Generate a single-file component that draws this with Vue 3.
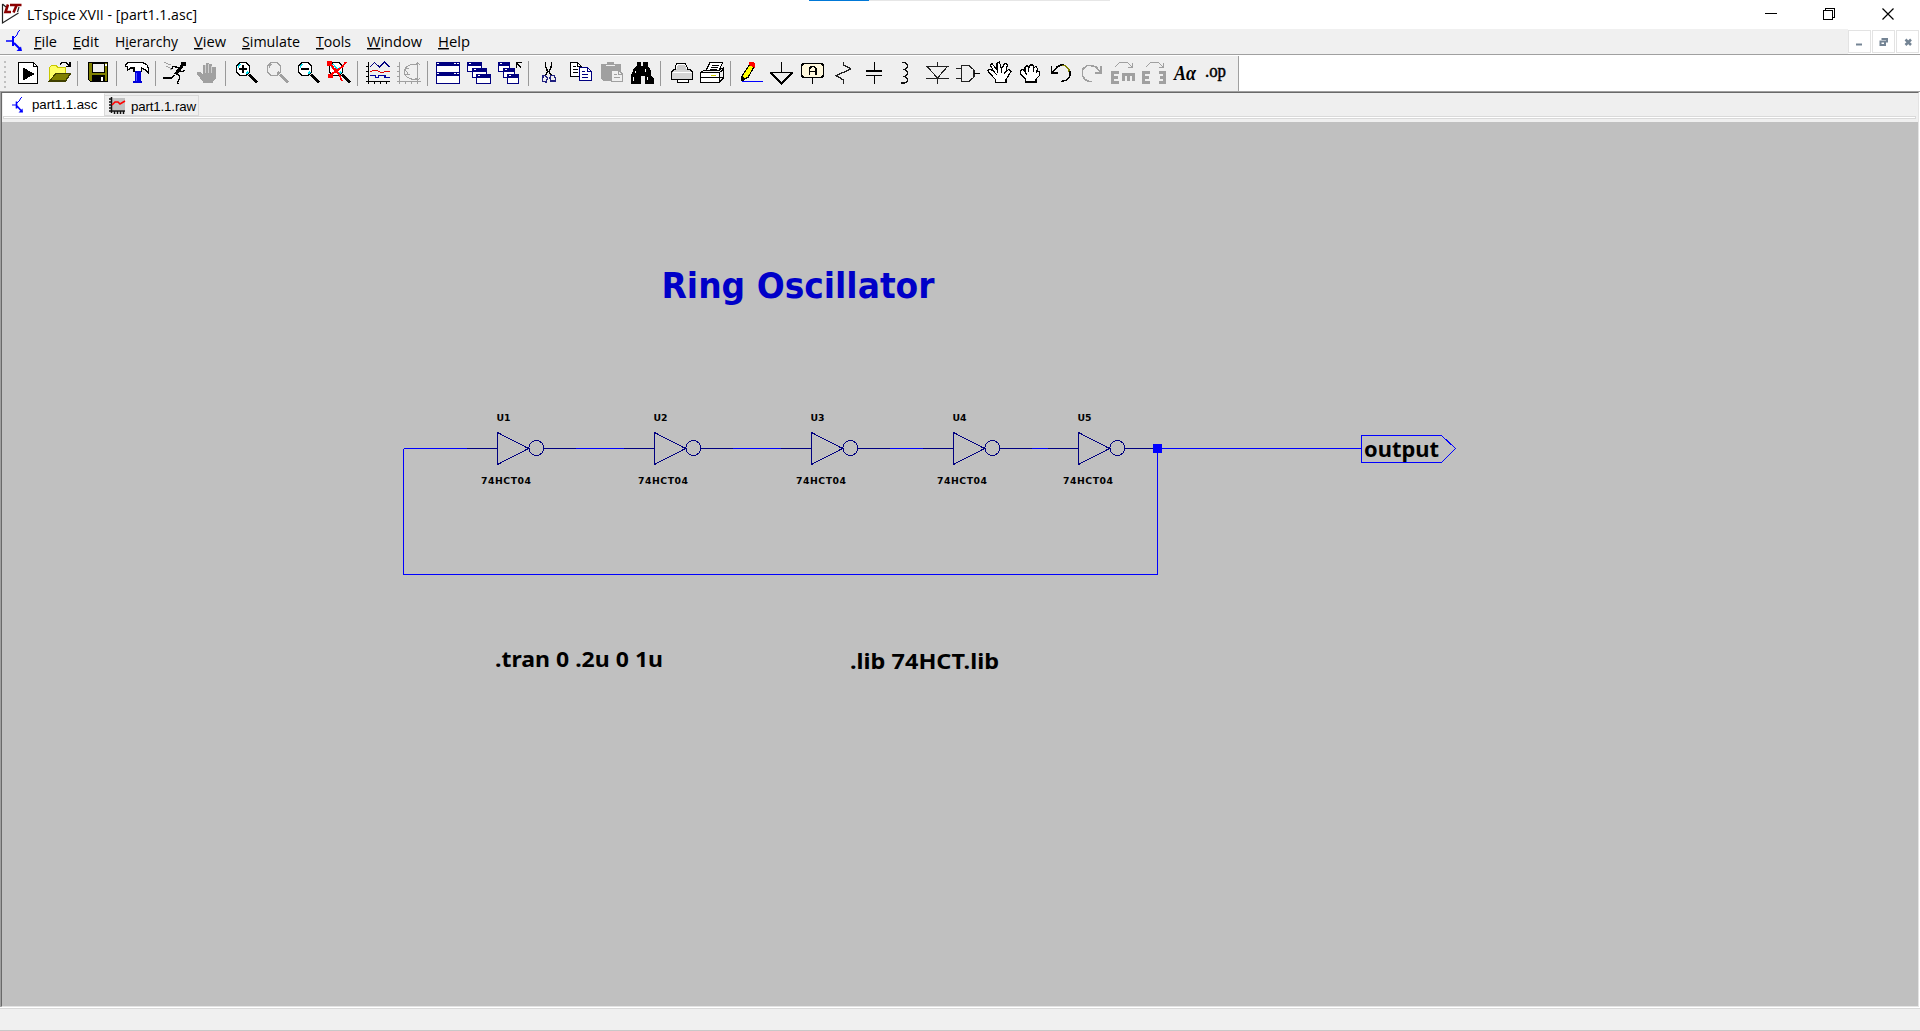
<script setup>
const menus = [
  { pre: '', key: 'F', post: 'ile', x: 34, w: 23 },
  { pre: '', key: 'E', post: 'dit', x: 73, w: 26 },
  { pre: 'H', key: 'i', post: 'erarchy', x: 115, w: 63 },
  { pre: '', key: 'V', post: 'iew', x: 194, w: 32 },
  { pre: '', key: 'S', post: 'imulate', x: 242, w: 58 },
  { pre: '', key: 'T', post: 'ools', x: 316, w: 35 },
  { pre: '', key: 'W', post: 'indow', x: 367, w: 55 },
  { pre: '', key: 'H', post: 'elp', x: 438, w: 32 }
]

const K = '#000', N = '#000080', G = '#a0a0a0'
const p = (d, stroke = K, fill = 'none', w = 1) => ({ d, stroke, fill, w })
const lens = (c, hi) => [
  p('M5 2L2 5V11L5 14H11L14 11V5L11 2Z', 'none', hi ? '#fff' : 'none'),
  p('M5 1.5H11L14.5 5V11L11 14.5H5L1.5 11V5Z', c, 'none', 1.3),
  p('M3.5 7V5L5.5 3M11 13L13 11', hi ? '#00e0f0' : c, 'none', 1.6),
  p('M14 13.5L22 21.5', c, 'none', 3.2)
]
const cascade = (w) => [[-.5, 1.5], [4.5, 7.5], [8.5, 13.5]].flatMap(([x, y]) => [
  p(`M${x} ${y}h${w}v9h-${w}Z`, N, '#fff'),
  p(`M${x} ${y}h${w}v2.5h-${w}Z`, N, N),
  p(`M${x + 1} ${y + 1}h2`, '#fff')
])
const tools = [
  [p('M1.5 1.5H16.5L20.5 5.5V22.5H1.5Z', K, '#fff', 1.2), p('M16.5 1.5V5.500H20.5'), p('M6 7V19L16.5 13Z', K, K)],
  [p('M1.5 20V6.5L3.5 4.5H8L10 6.5H17.5V12.5H9L2 20Z', '#c8c800', '#ffff66'), p('M1.5 20L8 12.5H22.5L17.5 20Z', '#404000', '#808000', 1.2), p('M12 3.5L14 1.5H18L21 4.5M22 1V5.5H18', K, 'none', 1.3)],
  'sep',
  [p('M1.5 1.5H20.5V20.500H3.5L1.5 18.5Z', K, '#808000', 1.4), p('M5 2H17V11H5Z', K, '#efefef'), p('M5.5 14.5H17.500V20.5H5.5Z', K, K), p('M13.500 16H15.500V19.5H13.500Z', 'none', '#fff'), p('M18 3H19.5V5H18Z', 'none', '#fff')],
  'sep',
  [p('M-.5 3.5L2.5 1.5H17L21 4L22.500 8V12L19 8.5L15.5 7V10.5H8V7H4.5L1.5 9.5V6L-.5 5Z', K, '#fff', 1.2), p('M9 10.5H14V20H15.500V21.5H7.5V20H9Z', '#0000d8', '#0000e8'), p('M10.5 12V20', '#55f')],
  'sep',
  [p('M16.500 1H20V4.500H16.500Z', K, K), p('M17 5L13 10L10.500 13.500', K, 'none', 3.2), p('M14.500 6.500L8 5.500L6 9M14 8.500L16.500 10.500L20.500 9.500M12 12.500L15 16L12.5 22L14.500 22.500M10 14L6.500 17H-1V15.500', K, 'none', 1.3), p('M-1 1L3 3L6 4M1 5L5 7L6.500 9', G)],
  [p('M1 12L4 11L7 14V4H9V12H10V2H12V12H13V3H15V12H16V6H19.5V17L16 21.5H8Z', G, G), p('M9.5 4V12M12.5 3V12M15.5 5V12', '#efefef', 'none', .6)],
  'sep',
  [...lens(K, true), p('M4 8H12M8 4V12', K, 'none', 2)],
  lens(G, false),
  [...lens(K, true), p('M4 8H12', K, 'none', 2)],
  [...lens(K, true), p('M6 5L10 8M8 11L12 7', '#00e0f0', 'none', 1.6), p('M0 2.500L4 5L7 9L11 13L14 20M18 1L15 5L10 9L5 12L1 15.500M0 1H3V4H0ZM1 13.500H4V16H1ZM4 7L9 9', '#f00', 'none', 1.8)],
  'sep',
  [p('M1.5 1V22.5M-1 5.5H1M-1 10.5H1M-1 15.5H1M-1 20.5H23M7.5 20V23M13.5 20V23M19.5 20V23', K, 'none', 1.2), p('M3 6L7.5 1.5L12.5 6L17.5 1L22.500 6', N), p('M3 11L7 9L11 10L15 12L19 10L22.500 11', '#e00000', 'none', 1.2), p('M3 14.5H8.500V16.5H11.500V14.5H18V16.5H22.500', '#0000a0', 'none', 1.2)],
  [p('M1.5 1V22.5M-1 5.5H1M-1 10.5H1M-1 15.5H1M-1 20.5H23M7.5 20V23M13.5 20V23M19.5 20V23M19.500 2V19M17.500 4L19.500 2L22 4M17.500 17L19.500 19L22 17M19 3H13.500L9 5.500L6.500 8.500V13L9 16L13.500 18H19M11 7L7 8.500L10 12.500M7 13.500H12', G)],
  'sep',
  [p('M-.5 1.5H22.5V11.5H-.5Z', N, '#fff'), p('M-.5 11.5H22.5V22.5H-.5Z', N, '#fff'), p('M-1 1H23V5H-1ZM-1 11H23V15H-1Z', 'none', N), p('M0 2.5H2M17 2.5H19M20 2.5H22M0 12.5H2M17 12.5H19M20 12.5H22', '#fff', 'none', 1.5)],
  cascade(14),
  [...cascade(11), p('M17.5 7V1.5H23M17.5 1.5L22.500 7.500', K, 'none', 1.2)],
  'sep',
  [p('M7.5 1V5L9.500 10.500L8 14M13.5 1V5L11 10.500L13 14', K, 'none', 1.5), p('M7.5 14.5H5L4.5 20.5L8 21L9.500 17ZM13 14.5H16L17.5 17V20H13L12 17Z', '#202080', 'none', 1.4)],
  [p('M1.5 1.5H8.5L12.5 5.5V15.5H1.5Z', K, '#fff'), p('M8.5 1.5V5.5H12.5M4 5.500H7M4 8.500H9M4 11.500H9'), p('M10.5 6.5H18.5L22.5 10.5V19.5H10.5Z', N, '#fff', 1.2), p('M18.5 6.5V10.5H22.5M13 10.500H16M13 13.500H19M13 16.500H19', N)],
  [p('M1 3H7V1H13V3H20V10H10V19H3L1 17Z', G, G), p('M6 4.5H15', '#efefef'), p('M11.5 9.5H19L22.5 13V20.5H11.5Z', G, '#efefef', 1.2), p('M14 13.5H17M14 16.5H20M18.5 9.5V13H22', G)],
  [p('M6 1H9V5H12V1H16V5L19 9V14L22 17V22H14V14H9V22H0V16L3 8L6 5Z', K, K), p('M4.500 10V12M2.500 16V20M14.500 8V11M16.500 16V19', '#fff', 'none', 1.5)],
  'sep',
  [p('M5 10V6L7 2H15L19 10', K, '#fff'), p('M1.5 17.5V11L4 8.5H20L22.5 11V18.5H1.5Z', K, '#d5d5d5'), p('M7 18.5H18V21.5H7Z', K, '#fff'), p('M8 4H15L17 9H6Z', 'none', '#ccc'), p('M2.500 11.500H22', '#fff')],
  [p('M5 9.500L9 1.5H21.500L18 10Z', K, '#fff'), p('M10.500 4.5H18M9.500 6.5H17M8.500 8.500H16', K), p('M-.5 11.5L4 9M19 8.500L22.500 7V17L18 21.500', K), p('M-.5 11.5H18.5V21.5H-.5ZM18.5 11.5L22.5 8', K, '#fff', 1.2), p('M-.5 16.5H23', K), p('M10 14.5H15', '#cccc00', 'none', 1.5)],
  'sep',
  [p('M2 19V15L10 3L14.500 5L8 16.500Z', K, '#ffff00', 1.2), p('M9 3L10 1H13.500L14.5 3V6L12 5Z', '#f00', '#f00'), p('M2 15L5 18L2 20Z', K, K), p('M2 20.5H22.5', '#00f')],
  [p('M10.5 1V11.5M-1 11.5H22M0 12L10.5 22.5L21 12', K, 'none', 1.5)],
  [p('M1.5 2.5H19.5L21.5 4.5V14.5L19.5 16.5H1.5L-.5 14.5V4.5Z', K, '#fff8dc', 1.5), p('M10.5 17V23', K), p('M7.500 13.500V7.500L9.500 5.5H12L14 7.500V13.500M8 10.500H14', K, 'none', 1.8)],
  [p('M10.5 1V4L18 8L3 14.5L10.500 19V23', '#222', 'none', 1.3)],
  [p('M10.5 1V10M2 10H18M2 14.5H18M10.5 15V23', K, 'none', 1.8)],
  [p('M6.500 1.5H10L12.500 4V6L10 8.5H7.500M10 8.5L12.500 11V13L10 15.5H7.500M10 15.5L12.500 18V20L10 22H6', '#111', 'none', 1.4)],
  [p('M11.5 1V5.5M0 5.5H22.500M0 17.5H22.500M1.500 6L11.5 17L21 6M11.5 17V23', '#222', 'none', 1.2)],
  [p('M-1 7.5H4M-1 17.5H4M4.5 4.5H12L17 9V16L12 20.5H4.5Z', '#222', 'none', 1.2), p('M17 12.5H23', K, 'none', 1.7)],
  [p('M0 9.500L2 8L6 10.500L2 4L4 2.500L9 9L9 2L11.500 1L13.500 8L17 2L19.500 3.500L18 10.500L21 8L23 10.500L18 18.500V21.5H7.500V18.500L1 11.500Z', K, '#fff', 1.1), p('M9 9V12M13.500 8V12M17.500 10.500L16 13M6 10.500L9 14')],
  [p('M1.500 9.500L4 8.500L6 11V6.500L8 4.500L10 6.500L11 4H14L15 6.500L17.500 5.500L18.500 8V10L20.500 11V14.500L17 18V21H6.500V18L1.500 13Z', K, '#fff', 1.1), p('M9.500 6.500V10.500M14.500 6.500V10.500M17.500 9V12M6 11L8 13.500')],
  [p('M1.500 5V12H8M2 11.5L7 6L11 4H14', K, 'none', 1.5), p('M12 4.5H15L19 8V11', '#808000', 'none', 1.4), p('M20 10V15L17 19L11 20.5', K, 'none', 1.3)],
  [p('M20 5V12H13.500M20 12L15 6L10 4.5H6L1.5 8.500V15L4 18.500L8 20.5H11', G, 'none', 1.7)],
  [p('M6.500 11.5H.5V21.5H6.500M1 16.5H6M11.5 20V13.500H23M16.5 13V20M21.5 13V20', G, 'none', 2.5), p('M3 6L7.500 1.5H15.500L20 6M20.5 2V6.5H16', G)],
  [p('M6.500 11.5H.5V21.5H6.500M1 16.5H6M15.500 11.5H21.500V21.5H15.500M16.500 16.5H21', G, 'none', 2.5), p('M3 6L7.500 1.5H15.500L20 6M20.5 2V6.5H16', G)],
  'Aa',
  '.op'
]
const gates = [
  { n: 'U1', x: 497.5, v: 481, from: 404 },
  { n: 'U2', x: 654.5, v: 638, from: 576 },
  { n: 'U3', x: 811.5, v: 796, from: 733 },
  { n: 'U4', x: 953.5, v: 937, from: 890 },
  { n: 'U5', x: 1078.5, v: 1063, from: 1032 }
]
</script>

<template>
  <div class="app">
    <i class="progress"><b></b></i>
    <header class="titlebar">
      <svg class="logo" width="20" height="22" viewBox="0 0 20 22">
        <path d="M2.500 4V23L18.500 13M2.500 4L6 7M19 7L17.500 12" fill="none" stroke="#222" stroke-width="1.200" />
        <path d="M8 4.500L5.500 12H11M10 5H21.500M16.500 5.500L13.500 12.500" fill="none" stroke="#8b0000" stroke-width="2.600" />
      </svg>
      <svg class="title" width="190" height="29"><text x="0" y="20" textLength="170" lengthAdjust="spacingAndGlyphs">LTspice XVII - [part1.1.asc]</text></svg>
      <div class="winbtns">
        <svg width="58" height="29"><path d="M7 13.5H19" /></svg>
        <svg width="58" height="29"><path d="M7.500 10.500H16.500V19.500H7.500ZM9.500 10V8.500H18.500V17.500H17" /></svg>
        <svg width="38" height="29"><path class="smooth" d="M8.500 8.500L19.500 19.500M19.500 8.500L8.500 19.500" /></svg>
      </div>
    </header>

    <nav class="menubar">
      <svg class="doc" width="20" height="24" viewBox="0 0 20 24"><path d="M0 12H6" stroke="#00f" stroke-width="1.500" /><path d="M7 7V17M8 14L14 20" stroke="#00f" stroke-width="2" fill="none" /><path d="M8 9L11 6L12 3L14 1" stroke="#00f" fill="none" /><path d="M16 22H10.500L15 17.500Z" fill="#00f" /></svg>
      <svg class="menus" width="480" height="25">
        <text v-for="m in menus" :key="m.x" :x="m.x - 26" y="18" :textLength="m.w" lengthAdjust="spacingAndGlyphs">{{ m.pre }}<tspan class="key">{{ m.key }}</tspan>{{ m.post }}</text>
      </svg>
      <div class="mdi">
        <svg width="23" height="23"><path d="M8 14.500H14" /></svg>
        <svg width="23" height="23"><path d="M8.500 11.500H13V15H8.500ZM10.500 10V9H15V12.500" stroke-width="1.500" /></svg>
        <svg width="23" height="23"><path class="x" d="M9.500 9.500L15 15M15 9.500L9.500 15" /></svg>
      </div>
    </nav>

    <div class="toolrow">
      <div class="toolbar">
        <i class="grip"></i>
        <template v-for="(t, i) in tools" :key="i">
          <i v-if="t === 'sep'" class="sep"></i>
          <svg v-else-if="t === 'Aa'" class="tool" width="24" height="24"><text class="aa" x="0" y="19" textLength="22" lengthAdjust="spacingAndGlyphs">Aα</text></svg>
          <svg v-else-if="t === '.op'" class="tool" width="24" height="24"><text class="op" x="0" y="15.500" textLength="21" lengthAdjust="spacingAndGlyphs">.op</text></svg>
          <svg v-else class="tool" width="24" height="24"><path v-for="(s, j) in t" :key="j" :d="s.d" :stroke="s.stroke" :fill="s.fill" :stroke-width="s.w" /></svg>
        </template>
      </div>
    </div>

    <main class="client">
      <div class="tabs">
        <div class="tab active">
          <svg width="14" height="18"><path d="M0 9H4" stroke="#00f" /><path d="M4.500 5.500V12.500M5 10L9 14.500" stroke="#00f" stroke-width="1.600" fill="none" /><path d="M5 7L8 4V3L10 1" stroke="#00f" fill="none" /><path d="M11 16.500H6.500L10.500 12.500Z" fill="#00f" /></svg>
          <span>part1.1.asc</span>
        </div>
        <div class="tab">
          <svg width="17" height="17"><path d="M3 1H16V13H3Z" fill="#c0c0c0" /><path d="M2.500 0V16M0 14H16M0 2H2M0 5H2M0 8H2M0 11H2M5.500 14V17M8.500 14V17M11.500 14V17M14.500 14V17" stroke="#111" stroke-width="1.500" /><path d="M3 8L6 5H9L11 7L16 4" stroke="#f00" stroke-width="1.600" fill="none" /></svg>
          <span>part1.1.raw</span>
        </div>
      </div>
      <div class="strip"></div>
      <svg class="schematic" width="1916" height="884" viewBox="2 122 1916 884">
        <g class="wire">
          <path d="M1157.500 448.500V574.500H403.500V448.500M1157.500 448.500H1361.500" />
          <path d="M1361.500 435.500H1441.500L1455.500 448.500L1441.500 462.500H1361.500Z" />
          <path v-for="g in gates" :key="g.n" :d="`M${g.from} 448.500H${g.x - 30}`" />
        </g>
        <g v-for="g in gates" :key="g.n">
          <g class="part">
            <path :d="`M${g.x - 30.5} 448.500H${g.x}M${g.x + 46.500} 448.500H${g.n === 'U5' ? 1153 : g.x + 78.500}`" />
            <path :d="`M${g.x} 432.500L${g.x + 31} 448.500L${g.x} 464.500Z`" />
            <circle :cx="g.x + 38.800" cy="448" r="7.500" />
          </g>
          <text class="small" :x="g.x - 1" y="421" textLength="14">{{ g.n }}</text>
          <text class="small" :x="g.v" y="484" textLength="50">74HCT04</text>
        </g>
        <path d="M1153 444h9v9h-9z" fill="#00f" />
        <text class="heading" x="661.500" y="298" textLength="273" lengthAdjust="spacingAndGlyphs">Ring Oscillator</text>
        <text class="directive" x="495" y="667" textLength="168" lengthAdjust="spacingAndGlyphs">.tran 0 .2u 0 1u</text>
        <text class="directive" x="850" y="669" textLength="149" lengthAdjust="spacingAndGlyphs">.lib 74HCT.lib</text>
        <text class="directive" x="1364" y="457" textLength="75" lengthAdjust="spacingAndGlyphs">output</text>
      </svg>
    </main>
    <footer class="status"></footer>
  </div>
</template>

<style>
body { margin: 0; overflow: hidden; }
</style>

<style scoped>
.app { width: 1920px; height: 1031px; display: flex; flex-direction: column; background: #fff; position: relative; font-family: "Open Sans", "Noto Sans", sans-serif; }
svg { display: block; flex: none; overflow: visible; }
.progress { position: absolute; left: 809px; top: 0; width: 301px; height: 1px; background: #e6e6e6; }
.progress b { display: block; width: 60px; height: 1px; background: #0078d7; }
.titlebar { height: 29px; display: flex; flex: none; }
.logo { width: 20px; height: 22px; }
.title { margin-left: 7px; font-size: 14.500px; }
.winbtns { margin-left: auto; margin-right: 8px; display: flex; }
.winbtns path { fill: none; stroke: #000; shape-rendering: crispEdges; }
.winbtns .smooth { shape-rendering: auto; stroke-width: 1.200; }
.menubar { height: 25px; flex: none; display: flex; background: #f0f0f0; border-bottom: 1px solid #a0a0a0; }
.doc { margin-left: 6px; }
.menus { font-size: 14.500px; }
.key { text-decoration: underline; }
.mdi { margin-left: auto; display: flex; gap: 1px; background: #fff; padding: 1px 1px 1px 0; }
.mdi svg { width: 23px; height: 23px; box-shadow: inset 0 0 0 1px #e3e3e3; background: #fff; }
.mdi path { fill: none; stroke: #748494; stroke-width: 2; }
.mdi .x { stroke-width: 2.500; }
.toolrow { height: 36px; flex: none; display: flex; border-bottom: 1px solid #a0a0a0; background: #fff; }
.toolbar { width: 1238px; display: flex; margin-top: 1px; background: #efefef; border-right: 1px solid #a0a0a0; }
.grip { width: 2px; height: 27px; margin: 5px 7px 0 4px; background: repeating-linear-gradient(#c0c0c0 0 2px, transparent 2px 5px); }
.tool { margin: 5px 3px 0 4px; shape-rendering: crispEdges; }
.sep { width: 1px; height: 25px; margin: 5px 5px 0 2px; background: #999; }
.aa { font: italic bold 20px "Liberation Serif", serif; }
.op { font: 18px "Liberation Serif", serif; stroke: #000; stroke-width: .5px; }
.client { flex: 1; display: flex; flex-direction: column; border: 1px solid #696969; border-right-color: #e3e3e3; border-bottom-color: #e3e3e3; margin: 0 1px; box-shadow: -1px 0 #a0a0a0; background: #efefef; }
.tabs { height: 23px; display: flex; padding-left: 1px; font: 13.300px "Liberation Sans", sans-serif; }
.tab { display: flex; box-sizing: border-box; width: 94px; height: 21px; margin-top: 2px; border: 1px solid #d9d9d9; border-left: 0; gap: 5px; padding: 1px 0 0 4px; white-space: nowrap; }
.tab span { line-height: 19px; letter-spacing: -.15px; }
.tab.active { width: 102px; height: 23px; margin-top: 0; background: #fff; border-color: #fff #d9d9d9 #fff #fff; border-bottom: 0; padding: 2px 0 0 9px; gap: 6px; }
.tab.active span { line-height: 17px; letter-spacing: -.05px; }
.strip { height: 1px; border: 1px solid #d9d9d9; background: #fff; margin: 0 2px 3px 1px; }
.schematic { background: #c0c0c0; overflow: hidden; shape-rendering: crispEdges; }
.wire { fill: none; stroke: #00f; }
.part { fill: none; stroke: #000080; }
.small { font: bold 9.300px "DejaVu Sans", sans-serif; }
.heading { font: bold 36px "DejaVu Sans", sans-serif; fill: #0000c8; }
.directive { font: bold 21.500px "Noto Sans", "Open Sans", sans-serif; }
.status { height: 21px; flex: none; margin-top: 1px; border-top: 1px solid #d9d9d9; border-bottom: 1px solid #c8c8c8; background: #f0f0f0; }
</style>
